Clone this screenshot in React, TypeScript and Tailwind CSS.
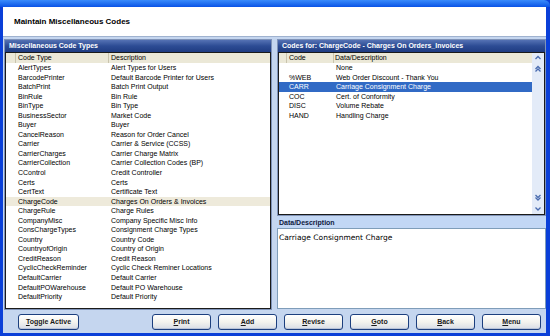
const codeTypes: [string, string][] = [
  ["AlertTypes", "Alert Types for Users"],
  ["BarcodePrinter", "Default Barcode Printer for Users"],
  ["BatchPrint", "Batch Print Output"],
  ["BinRule", "Bin Rule"],
  ["BinType", "Bin Type"],
  ["BusinessSector", "Market Code"],
  ["Buyer", "Buyer"],
  ["CancelReason", "Reason for Order Cancel"],
  ["Carrier", "Carrier & Service (CCSS)"],
  ["CarrierCharges", "Carrier Charge Matrix"],
  ["CarrierCollection", "Carrier Collection Codes (BP)"],
  ["CControl", "Credit Controller"],
  ["Certs", "Certs"],
  ["CertText", "Certificate Text"],
  ["ChargeCode", "Charges On Orders & Invoices"],
  ["ChargeRule", "Charge Rules"],
  ["CompanyMisc", "Company Specific Misc Info"],
  ["ConsChargeTypes", "Consignment Charge Types"],
  ["Country", "Country Code"],
  ["CountryofOrigin", "Country of Origin"],
  ["CreditReason", "Credit Reason"],
  ["CyclicCheckReminder", "Cyclic Check Reminer Locations"],
  ["DefaultCarrier", "Default Carrier"],
  ["DefaultPOWarehouse", "Default PO Warehouse"],
  ["DefaultPriority", "Default Priority"],
];

const codes: [string, string][] = [
  ["", "None"],
  ["%WEB", "Web Order Discount - Thank You"],
  ["CARR", "Carriage Consignment Charge"],
  ["COC", "Cert. of Conformity"],
  ["DISC", "Volume Rebate"],
  ["HAND", "Handling Charge"],
];

const buttons = ["Print", "Add", "Revise", "Goto", "Back", "Menu"];

function PanelHeader({ children }: { children: React.ReactNode }) {
  return (
    <div className="h-[12px] shrink-0 bg-gradient-to-b from-[#5572b4] via-[#2d4c94] to-[#1f3c82] pl-[4px] text-[7px] font-bold leading-[12px] text-white">
      {children}
    </div>
  );
}

function Chevron({ dir, double }: { dir: "up" | "down"; double?: boolean }) {
  const d = dir === "up" ? "M2.5 6 L5 3.5 L7.5 6" : "M2.5 3.5 L5 6 L7.5 3.5";
  return (
    <div className="flex h-[10px] w-[11px] items-center justify-center">
      <svg width="10" height="10" viewBox="0 0 10 10">
        <path d={d} stroke="#4a6cb0" strokeWidth="1.3" fill="none" />
        {double && (
          <path
            d={dir === "up" ? "M2.5 8.5 L5 6 L7.5 8.5" : "M2.5 1 L5 3.5 L7.5 1"}
            stroke="#4a6cb0"
            strokeWidth="1.3"
            fill="none"
          />
        )}
      </svg>
    </div>
  );
}

function Btn({ label, wide }: { label: string; wide?: boolean }) {
  return (
    <button
      className={`${wide ? "w-[61px]" : "w-[59px]"} h-[16px] rounded-[3px] border border-[#1c3f7e] bg-gradient-to-b from-[#ffffff] via-[#f3f3ee] to-[#d8dde6] text-[7px] font-semibold leading-[14px] text-[#1a1a1a] shadow-[inset_0_-1px_0_#b9c3d6]`}
    >
      <span className="underline">{label[0]}</span>
      {label.slice(1)}
    </button>
  );
}

export default function App() {
  return (
    <div className="flex h-[336px] w-[550px] flex-col overflow-hidden bg-[#0a3fd8] font-['Liberation_Sans',Arial,sans-serif]">
      <div className="h-[7px] shrink-0 rounded-tr-[6px] bg-gradient-to-b from-[#3a8bfb] to-[#0a52e6]" />
      <div className="ml-[3px] mr-[4px] mb-[3px] flex flex-1 flex-col bg-[#c5d6ef]">
        <div className="flex h-[30px] shrink-0 items-center border-b border-[#9fb2cf] bg-white pl-[11px] text-[8px] font-bold text-black">
          Maintain Miscellaneous Codes
        </div>
        <div className="flex flex-1 gap-[5px] pl-[1px] pt-[2px]">
          {/* Left panel */}
          <div className="flex w-[268px] flex-col border border-[#7f93b8]">
            <PanelHeader>Miscellaneous Code Types</PanelHeader>
            <div className="flex flex-1 flex-col border border-[#1a1a1a] bg-white">
              <div className="flex h-[10px] shrink-0 bg-[#ebe8d7] text-[7px] leading-[10px] text-black">
                <div className="w-[10px] border-r border-[#c9c4ad]" />
                <div className="w-[93px] border-r border-[#c9c4ad] pl-[2px]">Code Type</div>
                <div className="flex-1 pl-[2px]">Description</div>
              </div>
              {codeTypes.map(([c, d]) => (
                <div
                  key={c}
                  className={`flex h-[9.55px] text-[7px] leading-[9.55px] text-black ${c === "ChargeCode" ? "bg-[#eeeadb]" : ""}`}
                >
                  <div className="w-[12px]" />
                  <div className="w-[93px]">{c}</div>
                  <div className="flex-1">{d}</div>
                </div>
              ))}
            </div>
          </div>

          {/* Right column */}
          <div className="flex flex-1 flex-col">
            <div className="flex h-[177px] flex-col border border-[#7f93b8]">
              <PanelHeader>Codes for: ChargeCode - Charges On Orders_Invoices</PanelHeader>
              <div className="flex flex-1 border border-[#1a1a1a] bg-white">
                <div className="flex flex-1 flex-col">
                  <div className="flex h-[10px] shrink-0 bg-[#ebe8d7] text-[7px] leading-[10px] text-black">
                    <div className="w-[8px] border-r border-[#c9c4ad]" />
                    <div className="w-[47px] border-r border-[#c9c4ad] pl-[2px]">Code</div>
                    <div className="flex-1 pl-[1px]">Data/Description</div>
                  </div>
                  {codes.map(([c, d]) => (
                    <div
                      key={d}
                      className={`flex h-[9.55px] text-[7px] leading-[9.55px] ${c === "CARR" ? "bg-[#316ac5] text-white" : "text-black"}`}
                    >
                      <div className="w-[10px]" />
                      <div className="w-[47px]">{c}</div>
                      <div className="flex-1">{d}</div>
                    </div>
                  ))}
                </div>
                <div className="flex w-[12px] flex-col justify-between bg-[#e3ebf8]">
                  <div>
                    <Chevron dir="up" />
                    <Chevron dir="up" double />
                  </div>
                  <div>
                    <Chevron dir="down" double />
                    <Chevron dir="down" />
                  </div>
                </div>
              </div>
            </div>
            <div className="mt-[1px] h-[11px] shrink-0 bg-[#c2d7f5] pl-[2px] text-[7px] font-bold leading-[11px] text-[#10203e]">
              Data/Description
            </div>
            <div className="mb-[1px] flex-1 border border-[#7f9db9] bg-white px-[1px] pt-[4px] text-[7.5px] leading-[9px] text-black font-['DejaVu_Sans',sans-serif]">
              Carriage Consignment Charge
            </div>
          </div>
        </div>
        <div className="flex h-[23px] shrink-0 items-center gap-[7px] pl-[15px] pr-[5px]">
          <Btn label="Toggle Active" wide />
          <div className="flex-1" />
          {buttons.map((b) => (
            <Btn key={b} label={b} />
          ))}
        </div>
      </div>
    </div>
  );
}
